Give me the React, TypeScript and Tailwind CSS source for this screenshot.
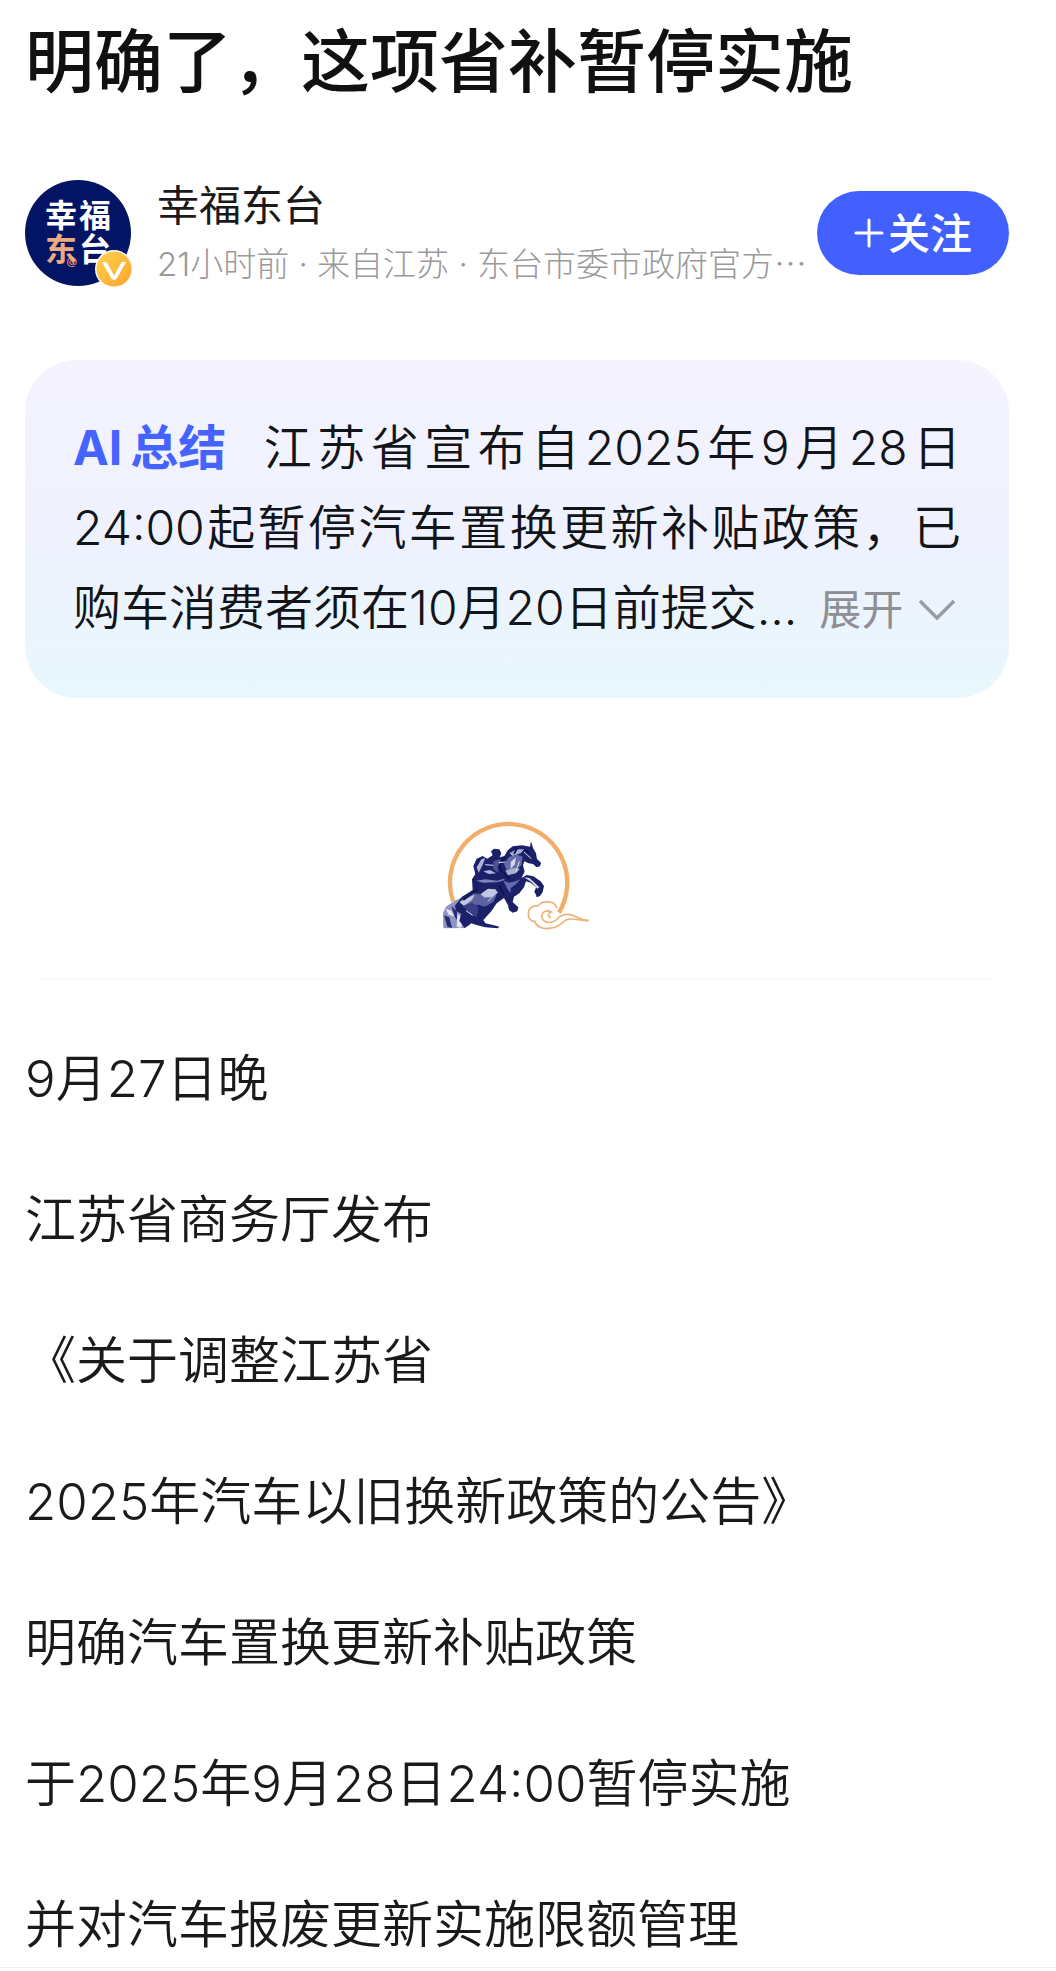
import { useState } from "react";

const paragraphs = [
  "9月27日晚",
  "江苏省商务厅发布",
  "《关于调整江苏省",
  "2025年汽车以旧换新政策的公告》",
  "明确汽车置换更新补贴政策",
  "于2025年9月28日24:00暂停实施",
  "并对汽车报废更新实施限额管理",
];

function VerifiedBadge() {
  return (
    <svg
      viewBox="0 0 38 38"
      className="absolute -right-0.5 -bottom-0.5 h-[38px] w-[38px]"
      aria-hidden="true"
    >
      <defs>
        <linearGradient id="gold" x1="0" y1="0" x2="1" y2="1">
          <stop offset="0" stopColor="#ffd24d" />
          <stop offset="1" stopColor="#fba52f" />
        </linearGradient>
      </defs>
      <circle cx="19" cy="19" r="19" fill="#fff" />
      <circle cx="19" cy="19" r="17.6" fill="url(#gold)" />
      <path
        d="M7 12h3.600q1 0 1.500 1l7 12.500 7-12.500q.5-1 1.500-1H31L22 28q-3 4-6 0z"
        fill="#fff"
      />
    </svg>
  );
}

function Avatar() {
  return (
    <div className="relative h-[106px] w-[106px] shrink-0">
      <div className="flex h-full w-full items-center justify-center rounded-full bg-[#021463]">
        <div className="grid grid-cols-2 gap-x-[2px] text-[32px] leading-[34px] font-bold text-white">
          <span>幸</span>
          <span>福</span>
          <span className="relative text-[#eeaa80]">
            东
            <span className="absolute right-0 bottom-0 text-[11px] leading-[12px] font-normal">
              @
            </span>
          </span>
          <span>台</span>
        </div>
      </div>
      <VerifiedBadge />
    </div>
  );
}

function HorseEmblem() {
  return (
    <svg
      viewBox="60 60 450 330"
      className="h-[110px] w-[150px]"
      role="img"
      aria-label="幸福东台"
    >
      {/* sun ring */}
      <path
        d="M93 304A176 176 0 1 1 411 338"
        fill="none"
        stroke="#f0ae68"
        strokeWidth="13"
      />
      {/* cloud */}
      <g fill="none" stroke="#eeb27a" strokeWidth="5" strokeLinecap="round">
        <path d="M404 322C398 308 386 304 372 306C354 304 350 318 346 318C328 315 318 328 319 343C318 358 330 366 338 364C344 380 362 388 380 385C404 384 414 374 432 360C455 350 478 366 499 361" />
        <path d="M386 352C376 350 378 338 388 336C376 328 358 336 359 350C362 368 384 372 400 362C410 350 424 340 445 344C466 348 474 362 499 361" />
      </g>
      {/* rock */}
      <path d="M64 385L63 338L72 320L98 302L125 290L135 310L124 348L150 362L142 376L128 384Z" fill="#8f94c0" />
      <path d="M66 346L82 352L90 384L76 380ZM88 318L104 332L112 368L98 350Z" fill="#262c72" />
      <path d="M70 326L88 332L98 350L80 344ZM106 340L122 360L118 384L104 380Z" fill="#e3e5f3" />
      {/* body and legs */}
      <path
        d="M98 318L120 290L152 270L150 238L160 222L154 198L164 176L182 168L196 176L212 166L207 154L216 146L232 148L238 160L233 172L247 168L258 150L272 139L300 136L324 140L327 124L333 144L342 160L345 177L357 188L354 199L344 202L333 192L320 190L307 184L303 196L308 215L298 234L314 225L334 229L356 244L366 258L362 276L354 288L344 292L342 284L337 276L342 262L326 248L312 244L306 262L292 280L276 290L272 306L289 322L286 334L272 338L261 330L258 316L246 294L224 310L208 334L184 360L190 370L216 376L232 380L228 385L190 382L166 376L148 370L128 384L112 362L118 342L104 334Z"
        fill="#1b2068"
      />
      <path d="M116 302L148 280L180 282L200 270L224 284L214 306L188 320L170 314L140 320Z" fill="#5c629f" />
      <path d="M112 306L134 294L158 284L150 300L126 318ZM176 282L198 266L220 268L228 278L206 292L186 292Z" fill="#c3c7e2" />
      <path d="M122 318L150 308L170 320L164 352L146 344L134 330Z" fill="#383f86" />
      <path d="M246 192L262 170L286 164L302 170L298 196L276 214L254 210Z" fill="#656ba8" />
      <path d="M262 160L284 148L306 148L296 160L272 168ZM250 212L276 204L294 206L282 220L258 226Z" fill="#a9afd2" />
      <path d="M266 186L282 172L278 194L266 206ZM306 232L322 234L338 248L352 262L346 266L328 246Z" fill="#d3d7eb" />
      <path d="M164 202L178 178L190 174L182 194L170 218ZM184 214L204 210L222 220L200 222Z" fill="#afb5d8" />
      <path d="M162 242L190 238L226 242L246 236L248 240L226 247L184 248Z" fill="#7c83b8" />
      <path d="M244 242L262 248L280 244L296 238L280 254L266 264L266 280L256 266Z" fill="#646bab" />
      <path d="M214 184L232 178L240 188L226 200L230 218L214 208Z" fill="#4c5396" />
      <path
        d="M166 268L124 300M232 256L246 284M250 170L232 196L240 216M286 144L276 162M312 150L322 164M244 216L262 238"
        fill="none"
        stroke="#0c1151"
        strokeWidth="5"
      />
      <path
        d="M306 156L328 176M292 184L282 214M230 188L250 186M190 194L214 196M132 332L152 346M198 304L218 284"
        fill="none"
        stroke="#dfe2f1"
        strokeWidth="3"
      />
    </svg>
  );
}

export default function ArticlePage() {
  const [following, setFollowing] = useState(false);
  const [expanded, setExpanded] = useState(false);

  return (
    <main className="min-h-screen bg-white pt-[22px] font-['Inter','Noto_Sans_CJK_SC',sans-serif] text-[#1a1a1a]">
      <div className="border-b border-[#f0f0f0] pr-[47px] pb-1 pl-[25px]">
        <h1 className="text-[69px] leading-[80px] font-medium text-[#111]">
          明确了，这项省补暂停实施
        </h1>

        <header className="mt-[70px] flex items-center">
          <Avatar />
          <div className="ml-[26px] min-w-0 flex-1 pt-1">
            <h2 className="text-[42px] leading-[59px]">幸福东台</h2>
            <p className="overflow-hidden text-[33px] leading-[59px] font-light whitespace-nowrap text-[#999]">
              21小时前 · 来自江苏 · 东台市委市政府官方⋯
            </p>
          </div>
          <button
            onClick={() => setFollowing(!following)}
            className="ml-2 flex h-[84px] w-48 shrink-0 items-center justify-center gap-1 rounded-full bg-[#4260ff] text-[42px] font-medium text-white"
          >
            <svg viewBox="0 0 30 30" className="h-[30px] w-[30px]" aria-hidden="true">
              <path
                d="M15 2v26M2 15h26"
                stroke="#fff"
                strokeWidth="3"
                strokeLinecap="round"
              />
            </svg>
            关注
          </button>
        </header>

        <section className="mt-[66px] rounded-[52px] bg-linear-to-b from-[#f4f3fe] via-[#eef2fe] via-60% to-[#e8f8fc] px-12 py-12">
          <p className="text-justify text-[48px] leading-[80px] font-[350] text-[#111418]">
            <strong className="mr-8 inline-flex gap-2 font-bold text-[#4564ff]">
              <span>AI</span>
              <span>总结</span>
            </strong>
            江苏省宣布自2025年9月28日24:00起暂停汽车置换更新补贴政策，已购车消费者须在10月20日前提交...
            <button
              onClick={() => setExpanded(!expanded)}
              aria-expanded={expanded}
              className="ml-[22px] inline-flex items-center gap-4 text-[42px] font-normal text-[#8e8e93]"
            >
              展开
              <svg viewBox="0 0 36 22" className="h-[22px] w-9" aria-hidden="true">
                <path d="M1 2l17 17L35 2" fill="none" stroke="#989ca4" strokeWidth="3.500" />
              </svg>
            </button>
          </p>
        </section>

        <div className="mx-4 mt-[122px] flex justify-center border-b-2 border-[#fafafa] pb-12">
          <HorseEmblem />
        </div>

        <article className="mt-[60px] flex flex-col gap-16 text-[51px] leading-[77px] font-[350]">
          {paragraphs.map((text) => (
            <p key={text}>{text}</p>
          ))}
        </article>
      </div>
    </main>
  );
}
